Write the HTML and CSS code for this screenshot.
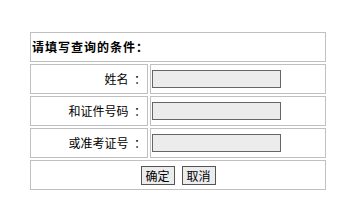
FILE: index.html
```html
<!DOCTYPE html>
<html lang="zh-CN">

<head>
  <meta charset="UTF-8">
  <title>查询</title>
  <link rel="stylesheet" href="styles.css">
</head>

<body>
  <table class="query-table">
    <colgroup>
      <col class="col-label">
      <col class="col-field">
    </colgroup>
    <tr>
      <td colspan="2" class="title">请填写查询的条件：</td>
    </tr>
    <tr>
      <td class="label">姓名&nbsp;&nbsp;：</td>
      <td class="field"><input type="text" class="text-input"></td>
    </tr>
    <tr>
      <td class="label">和证件号码&nbsp;&nbsp;：</td>
      <td class="field"><input type="text" class="text-input"></td>
    </tr>
    <tr>
      <td class="label">或准考证号&nbsp;&nbsp;：</td>
      <td class="field"><input type="text" class="text-input"></td>
    </tr>
    <tr>
      <td colspan="2">
        <div class="actions">
          <button type="submit" class="btn">确定</button>
          <button type="button" class="btn">取消</button>
        </div>
      </td>
    </tr>
  </table>
</body>

</html>
```

FILE: styles.css
```css
body {
  margin: 0;
  background: #fff;
  font-family: "Noto Sans CJK SC", "Liberation Sans", sans-serif;
  font-size: 12px;
  color: #000;
}

.query-table {
  width: 300px;
  margin: 30px 0 0 28px;
  border-collapse: separate;
  border-spacing: 2px;
  table-layout: fixed;
}

.col-label {
  width: 118px;
}

.col-field {
  width: 176px;
}

.query-table td {
  height: 28px;
  padding: 0 1px;
  border: 1px solid #c0c0c0;
  vertical-align: middle;
  line-height: 14px;
}

.title {
  font-weight: bold;
  letter-spacing: 1px;
}

.label {
  text-align: right;
}

.text-input {
  display: block;
  box-sizing: border-box;
  width: 129px;
  height: 18px;
  margin: 0;
  padding: 0 2px;
  border: 1px solid #666;
  background: #ececec;
  font: inherit;
}

.actions {
  display: flex;
  justify-content: center;
  gap: 7px;
}

.btn {
  box-sizing: border-box;
  width: 34px;
  height: 19px;
  margin: 0;
  padding: 0;
  border: 1px solid #555;
  background: #ececec;
  font-family: inherit;
  font-size: 12px;
  line-height: 15px;
  color: #000;
}
```
